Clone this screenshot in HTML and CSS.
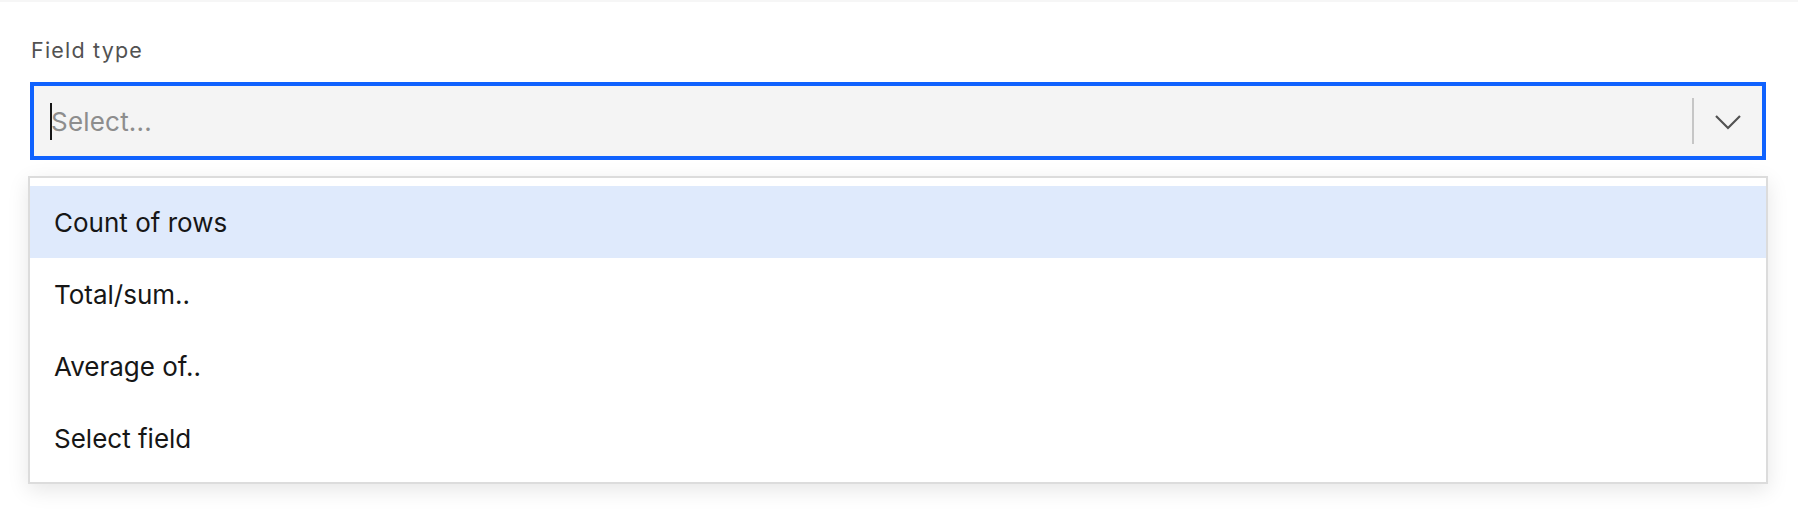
FILE: index.html
```html
<!DOCTYPE html>
<html>
<head>
<meta charset="utf-8">
<link rel="stylesheet" href="styles.css">
</head>
<body>
<div class="page">
  <div class="topline"></div>
  <div class="field">
    <label class="label">Field type</label>
    <div class="combo">
      <div class="input"><span class="caret"></span><span class="placeholder">Select...</span></div>
      <div class="sep"></div>
      <div class="chev">
        <svg width="26" height="15" viewBox="0 0 26 15"><polyline points="1,1 13,13 25,1" fill="none" stroke="#525252" stroke-width="2.2"/></svg>
      </div>
    </div>
    <div class="menu">
      <div class="item active">Count of rows</div>
      <div class="item">Total/sum..</div>
      <div class="item">Average of..</div>
      <div class="item">Select field</div>
    </div>
  </div>
</div>
</body>
</html>
```
FILE: styles.css
```css
html, body {
  margin: 0;
  padding: 0;
  background: #ffffff;
}
.page {
  width: 1798px;
  height: 520px;
  font-family: "Inter", "Noto Sans", "Liberation Sans", sans-serif;
}
.topline {
  height: 2px;
  background: #f6f6f6;
}
.field {
  padding: 0 32px 0 30px;
}
.label {
  display: block;
  font-size: 21.5px;
  line-height: 28px;
  color: #525252;
  padding-top: 34px;
  height: 46px;
  letter-spacing: 1.2px;
  padding-left: 1px;
}
.combo {
  box-sizing: border-box;
  height: 78px;
  border: 4px solid #0f62fe;
  background: #f4f4f4;
  display: flex;
  align-items: center;
}
.input {
  flex: 1;
  display: flex;
  align-items: center;
  padding-left: 16px;
}
.caret {
  display: inline-block;
  width: 2px;
  height: 37px;
  background: #161616;
  margin-right: -1px;
}
.placeholder {
  font-size: 26px;
  color: #8d8d8d;
  letter-spacing: 0.2px;
}
.sep {
  width: 2px;
  height: 46px;
  background: #c6c6c6;
}
.chev {
  width: 68px;
  display: flex;
  justify-content: center;
  align-items: center;
  padding-top: 2px;
}
.menu {
  margin: 16px -2px 0 -2px;
  border: 2px solid #dcdcdc;
  background: #ffffff;
  padding: 8px 0;
  box-shadow: 0 6px 20px rgba(0, 0, 0, 0.10);
}
.item {
  height: 72px;
  display: flex;
  align-items: center;
  padding-left: 24px;
  font-size: 26px;
  color: #161616;
}
.item.active {
  background: #dfeafc;
}
```
